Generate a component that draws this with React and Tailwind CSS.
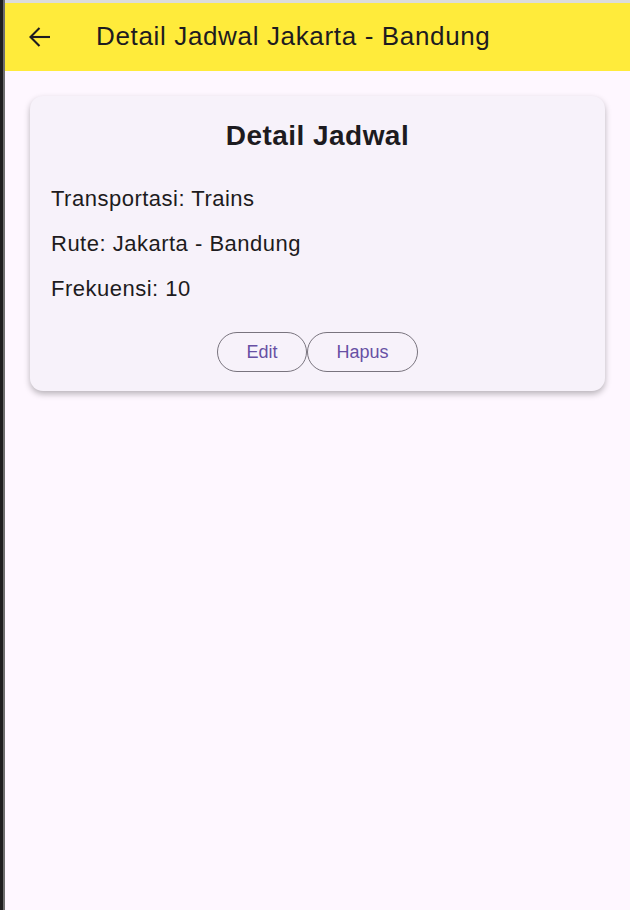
export default function App() {
  const font = { fontFamily: '"Liberation Sans", Arial, sans-serif' };
  return (
    <div className="flex h-[910px] w-[630px] overflow-hidden bg-[#fef7ff]" style={font}>
      <div className="w-[3px] bg-[#1f1f1f]" />
      <div className="w-[2px] bg-[#6e6e6e]" />
      <div className="flex flex-1 flex-col">
        <div className="h-[3px] bg-[#dcdcdc]" />
        <div className="flex h-[68px] items-center bg-[#ffeb3b] text-[#1d1b20]">
          <div className="ml-[23px] flex h-6 w-6 items-center justify-center">
            <svg width="24" height="24" viewBox="0 0 24 24" fill="none" stroke="#1d1b20" strokeWidth="2.1">
              <path d="M2.5 12H22" />
              <path d="M11.5 3L2.5 12l9 9" />
            </svg>
          </div>
          <div className="ml-[44px] -mt-[2px] text-[26px] leading-none tracking-[0.65px]">Detail Jadwal Jakarta - Bandung</div>
        </div>
        <div className="px-[25px] pt-[25px]">
          <div className="rounded-[13px] bg-[#f7f2fa] px-[21px] pt-[24px] pb-[19px] shadow-[0_3px_6px_rgba(0,0,0,0.28)]">
            <div className="text-center text-[28px] font-bold leading-[32px] tracking-[0.45px] text-[#1d1b20]">Detail Jadwal</div>
            <div className="mt-[35px] flex flex-col gap-[21px] text-[22px] leading-[24px] tracking-[0.5px] text-[#1d1b20]">
              <div>Transportasi: Trains</div>
              <div>Rute: Jakarta - Bandung</div>
              <div>Frekuensi: 10</div>
            </div>
            <div className="mt-[31px] flex justify-center">
              <button className="flex h-[40px] w-[90px] items-center justify-center rounded-full border border-[#79747e] text-[18px] text-[#6750a4]">Edit</button>
              <button className="flex h-[40px] w-[111px] items-center justify-center rounded-full border border-[#79747e] text-[18px] text-[#6750a4]">Hapus</button>
            </div>
          </div>
        </div>
      </div>
    </div>
  );
}
